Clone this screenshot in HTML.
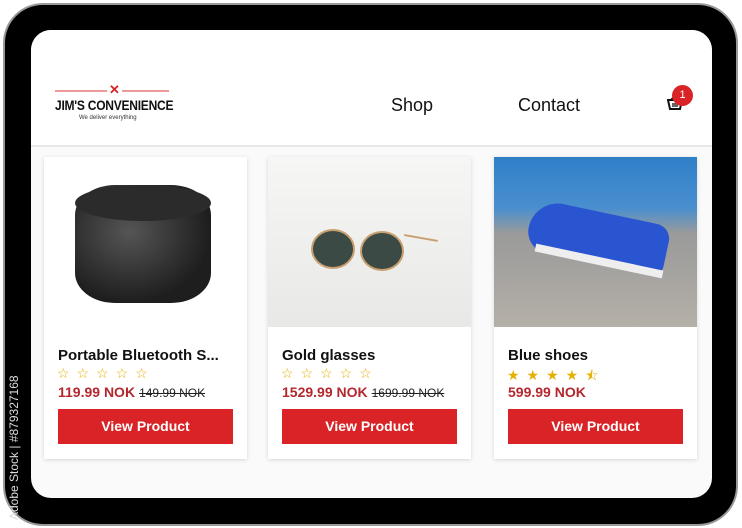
<!DOCTYPE html>
<html><head><style>
*{margin:0;padding:0;box-sizing:border-box}
body{width:742px;height:528px;background:#fff;position:relative;overflow:hidden;font-family:"Liberation Sans",sans-serif}
.bezel{position:absolute;left:5px;top:5px;width:731px;height:519px;background:#000;border-radius:38px;box-shadow:0 0 0 2px #999}
.screen{position:absolute;left:31px;top:30px;width:681px;height:468px;background:#fafafa;border-radius:20px;overflow:hidden}
.header{position:absolute;left:0;top:0;width:681px;height:117px;background:#fff;border-bottom:2px solid #e8e8e8}
.nav{position:absolute;top:65px;font-size:18px;color:#111}
.card{position:absolute;top:127px;width:203px;height:302px;background:#fff;box-shadow:0 1px 4px rgba(0,0,0,.15)}
.img{height:170px;position:relative;overflow:hidden}
.t{position:absolute;left:14px;top:190px;font-weight:bold;font-size:15px;color:#111}
.st{position:absolute;left:13px;top:208px;font-size:14px;color:#e6b000;letter-spacing:7px}
.p{position:absolute;left:14px;top:227px;font-weight:bold;font-size:14px;color:#b3272d}
.p s{font-weight:normal;color:#222;font-size:12px;margin-left:4px}
.b{position:absolute;left:14px;top:252px;width:175px;height:35px;background:#d92326;color:#fff;font-weight:bold;font-size:14px;text-align:center;line-height:35px}
.wm{position:absolute;left:7px;top:520px;transform:rotate(-90deg);transform-origin:0 0;color:#ddd;font-size:12px;white-space:nowrap}
</style></head><body>
<div class="bezel"></div>
<div class="screen">
 <div class="header">
  <div style="position:absolute;left:24px;top:60px;width:114px;height:2px;background:#e99"></div>
  <div style="position:absolute;left:76px;top:53px;color:#d92326;font-weight:bold;font-size:13px;background:#fff;padding:0 2px;line-height:14px">✕</div>
  <div style="position:absolute;left:24px;top:67px;font-weight:bold;font-size:14px;color:#111;letter-spacing:-0.3px;transform:scaleX(0.86);transform-origin:0 0">JIM'S CONVENIENCE</div>
  <div style="position:absolute;left:48px;top:85px;font-size:6px;color:#333">We deliver everything</div>
  <div class="nav" style="left:360px">Shop</div>
  <div class="nav" style="left:487px">Contact</div>
  <svg style="position:absolute;left:636px;top:66px" width="16" height="14" viewBox="0 0 16 14"><path d="M1 4h14l-2 9H3z M4 4l3-3M12 4l-3-3" fill="none" stroke="#111" stroke-width="2"/><path d="M6 7v4M8 7v4M10 7v4" stroke="#111" stroke-width="1.3"/></svg>
  <div style="position:absolute;left:641px;top:55px;width:21px;height:21px;border-radius:50%;background:#d92326;color:#fff;font-size:11px;text-align:center;line-height:21px">1</div>
 </div>
 <div class="card" style="left:13px">
  <div class="img" style="background:#fff">
   <div style="position:absolute;left:31px;top:28px;width:136px;height:118px;border-radius:40px/30px;background:radial-gradient(ellipse at 40% 40%,#555,#1e1e1e 70%)"></div>
   <div style="position:absolute;left:31px;top:28px;width:136px;height:36px;border-radius:50%;background:#2b2b2b"></div>
  </div>
  <div class="t">Portable Bluetooth S...</div><div class="st">☆☆☆☆☆</div>
  <div class="p">119.99 NOK<s>149.99 NOK</s></div><div class="b">View Product</div>
 </div>
 <div class="card" style="left:237px">
  <div class="img" style="background:linear-gradient(#f6f6f4,#e8e8e6)">
   <div style="position:absolute;left:43px;top:72px;width:44px;height:40px;border-radius:50%;background:#3b4a44;border:2px solid #c8a070"></div>
   <div style="position:absolute;left:92px;top:74px;width:44px;height:40px;border-radius:50%;background:#3b4a44;border:2px solid #c8a070"></div>
   <div style="position:absolute;left:136px;top:80px;width:34px;height:2px;background:#c8a070;transform:rotate(10deg)"></div>
  </div>
  <div class="t">Gold glasses</div><div class="st">☆☆☆☆☆</div>
  <div class="p">1529.99 NOK<s>1699.99 NOK</s></div><div class="b">View Product</div>
 </div>
 <div class="card" style="left:463px">
  <div class="img" style="background:linear-gradient(#2f7fc8 0,#4a8fcf 30%,#9a9a9a 45%,#b5b0a8 100%)">
   <div style="position:absolute;left:34px;top:55px;width:140px;height:52px;border-radius:40px 20px 16px 30px;background:#2a55d0;transform:rotate(12deg)"></div>
   <div style="position:absolute;left:40px;top:100px;width:130px;height:8px;background:#eee;transform:rotate(12deg)"></div>
  </div>
  <div class="t">Blue shoes</div><div class="st">★★★★⯪</div>
  <div class="p">599.99 NOK</div><div class="b">View Product</div>
 </div>
</div>
<div class="wm">Adobe Stock | #879327168</div>
</body></html>
